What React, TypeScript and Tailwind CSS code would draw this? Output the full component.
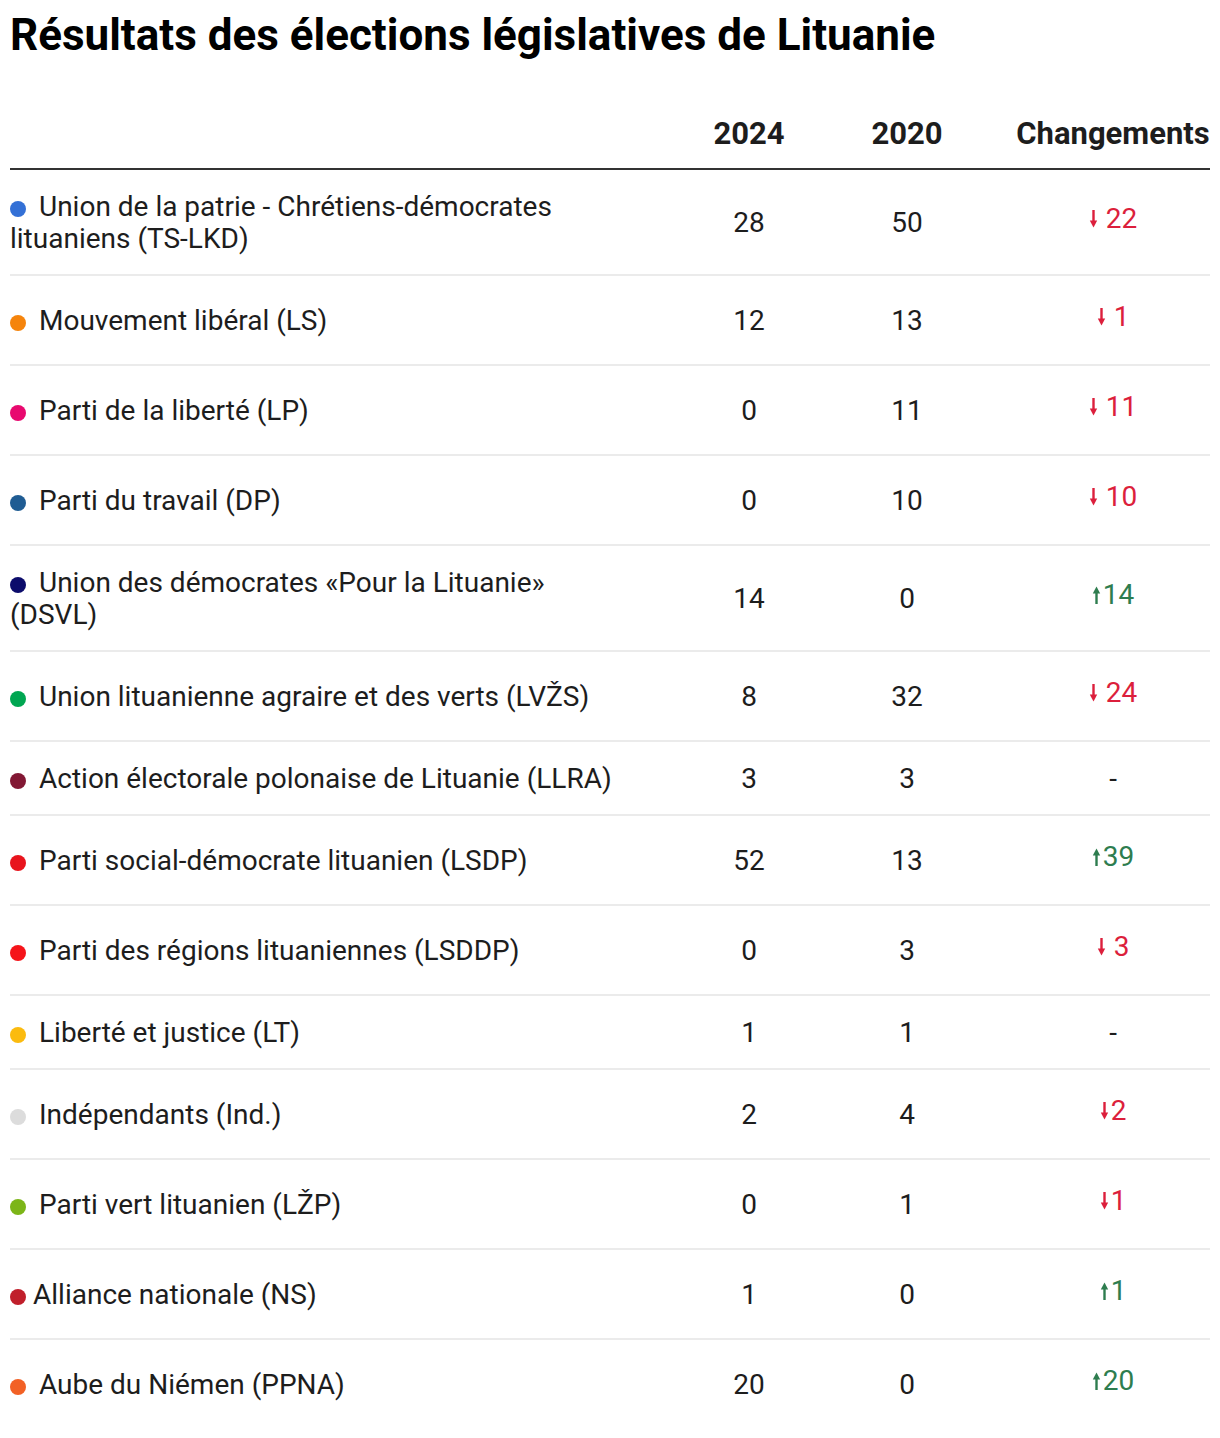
const rows: { name: string; color: string; y24: number; y20: number; change: number | null; sep?: boolean; tight?: boolean }[] = [
  { name: 'Union de la patrie - Chrétiens-démocrates lituaniens (TS-LKD)', color: '#3370d6', y24: 28, y20: 50, change: -22, sep: true },
  { name: 'Mouvement libéral (LS)', color: '#f5840c', y24: 12, y20: 13, change: -1, sep: true },
  { name: 'Parti de la liberté (LP)', color: '#e8096f', y24: 0, y20: 11, change: -11, sep: true },
  { name: 'Parti du travail (DP)', color: '#1f5c93', y24: 0, y20: 10, change: -10, sep: true },
  { name: 'Union des démocrates «Pour la Lituanie» (DSVL)', color: '#0c0c6b', y24: 14, y20: 0, change: 14 },
  { name: 'Union lituanienne agraire et des verts (LVŽS)', color: '#00a651', y24: 8, y20: 32, change: -24, sep: true },
  { name: 'Action électorale polonaise de Lituanie (LLRA)', color: '#821834', y24: 3, y20: 3, change: null },
  { name: 'Parti social-démocrate lituanien (LSDP)', color: '#e8141d', y24: 52, y20: 13, change: 39 },
  { name: 'Parti des régions lituaniennes (LSDDP)', color: '#f5141a', y24: 0, y20: 3, change: -3, sep: true },
  { name: 'Liberté et justice (LT)', color: '#fbbb0f', y24: 1, y20: 1, change: null },
  { name: 'Indépendants (Ind.)', color: '#dcdcdc', y24: 2, y20: 4, change: -2 },
  { name: 'Parti vert lituanien (LŽP)', color: '#7cb518', y24: 0, y20: 1, change: -1 },
  { name: 'Alliance nationale (NS)', color: '#c01f2b', y24: 1, y20: 0, change: 1, tight: true },
  { name: 'Aube du Niémen (PPNA)', color: '#f26125', y24: 20, y20: 0, change: 20 },
];

const Arrow = ({ up }: { up: boolean }) => (
  <svg width="9" height="18" viewBox="0 0 9 18" className="inline-block">
    {up ? (
      <>
        <path d="M4.5 6 V18" stroke="currentColor" strokeWidth="2.4" />
        <path d="M0.8 7.5 L4.5 0.5 L8.2 7.5 Z" fill="currentColor" />
      </>
    ) : (
      <>
        <path d="M4.5 0 V12" stroke="currentColor" strokeWidth="2.4" />
        <path d="M0.8 10.5 L4.5 17.5 L8.2 10.5 Z" fill="currentColor" />
      </>
    )}
  </svg>
);

const Change = ({ value, sep }: { value: number | null; sep?: boolean }) => {
  if (value === null) return <span className="leading-[32px]">-</span>;
  const up = value > 0;
  return (
    <div className={`h-[48px] pt-[4px] flex items-start justify-center ${up ? 'text-[#2e7d4f]' : 'text-[#dc1f3c]'}`}>
      <span className="flex items-center leading-[32px]">
        <Arrow up={up} />
        <span className={sep ? 'ml-[8px]' : 'ml-[2px]'}>{Math.abs(value)}</span>
      </span>
    </div>
  );
};

export default function App() {
  return (
    <div className="bg-white w-[1220px] min-h-[1438px] px-[10px] pt-[8px] font-['Roboto',sans-serif] text-[#1d1d1d]">
      <h1 className="text-[44px] leading-[54px] font-bold text-black">
        Résultats des élections législatives de Lituanie
      </h1>

      <div className="mt-[56px] text-[28px]">
        {/* Header */}
        <div className="grid grid-cols-[660px_158px_158px_1fr] border-b-2 border-[#333] pb-[18px] text-[31px] font-bold leading-[32px]">
          <div />
          <div className="text-center">2024</div>
          <div className="text-center">2020</div>
          <div className="pl-[30px] text-center whitespace-nowrap">Changements</div>
        </div>

        {/* Rows */}
        {rows.map((r, i) => (
          <div
            key={r.name}
            className={`grid grid-cols-[660px_158px_158px_1fr] items-center pt-[21px] pb-[19px] leading-[32px] ${
              i === rows.length - 1 ? '' : 'border-b-2 border-[#ebebeb]'
            }`}
          >
            <div className="pr-[40px]">
              <span
                className="inline-block w-[16px] h-[16px] rounded-full align-[-1px]"
                style={{ backgroundColor: r.color }}
              />
              {r.tight ? '' : <span className="inline-block w-[13px]" />}
              <span className={r.tight ? 'ml-[7px]' : ''}>{r.name}</span>
            </div>
            <div className="text-center">{r.y24}</div>
            <div className="text-center">{r.y20}</div>
            <div className="pl-[30px] text-center">
              <Change value={r.change} sep={r.sep} />
            </div>
          </div>
        ))}
      </div>
    </div>
  );
}
